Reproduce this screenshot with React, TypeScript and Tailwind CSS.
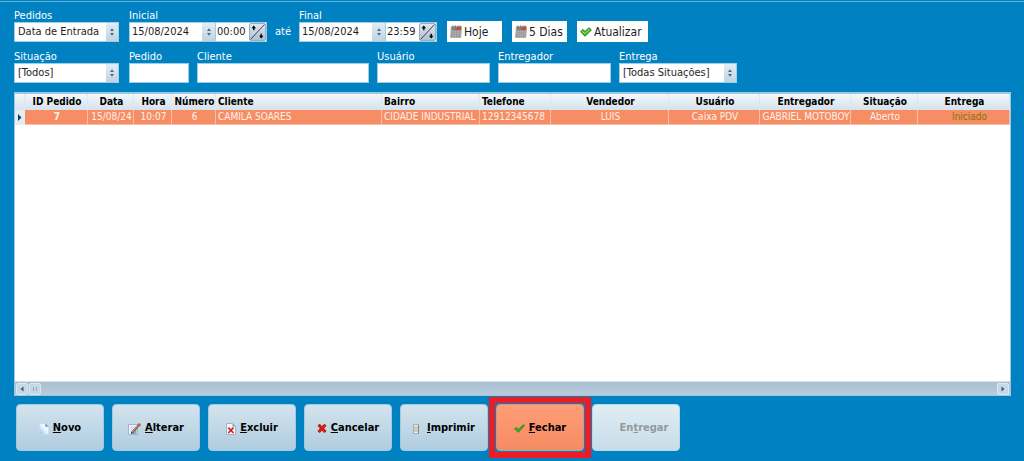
import type { ReactNode } from "react";

const inputBase =
  "block h-5 w-full border border-[#9fcfe4] bg-white px-[3px] text-[11px] leading-4 text-[#1e1e1e] outline-none";

function UpDown() {
  return (
    <svg viewBox="0 0 6 8" className="h-2 w-1.5" aria-hidden="true">
      <path d="M3 0.3 5 3H1Z M3 7.7 5 5H1Z" fill="#3d6c98" />
    </svg>
  );
}

function Field({ id, label, className, children }: { id: string; label: string; className: string; children: ReactNode }) {
  return (
    <div className={`flex flex-col ${className}`}>
      <label htmlFor={id} className="h-[13px] text-[11px] leading-[13px] whitespace-nowrap text-white">
        {label}
      </label>
      {children}
    </div>
  );
}

function SelectField({ id, label, className, options }: { id: string; label: string; className: string; options: string[] }) {
  return (
    <Field id={id} label={label} className={className}>
      <div className="relative">
        <select id={id} className={`${inputBase} appearance-none`}>
          {options.map((option) => (
            <option key={option}>{option}</option>
          ))}
        </select>
        <span className="pointer-events-none absolute inset-y-px right-px flex w-3 items-center justify-center bg-linear-to-b from-[#e3eef5] to-[#bfd3e1]">
          <UpDown />
        </span>
      </div>
    </Field>
  );
}

function TextField({ id, label, className }: { id: string; label: string; className: string }) {
  return (
    <Field id={id} label={label} className={className}>
      <input id={id} type="text" className={inputBase} />
    </Field>
  );
}

function DateTimeField({ id, label, date, time }: { id: string; label: string; date: string; time: string }) {
  return (
    <Field id={id} label={label} className="w-[138px]">
      <div className="flex h-5 border border-[#9fcfe4] bg-white text-[11px] text-[#1e1e1e]">
        <input id={id} type="text" defaultValue={date} className="w-[72px] px-0.5 outline-none" />
        <button type="button" aria-label={`${label}: alterar data`} className="flex w-3.5 items-center justify-center border-r border-[#9fcfe4] bg-linear-to-b from-[#e3eef5] to-[#bfd3e1]">
          <UpDown />
        </button>
        <input type="text" aria-label={`${label}: hora`} defaultValue={time} className="w-[33px] pl-px outline-none" />
        <button type="button" aria-label={`${label}: alterar hora`} className="flex-1 rounded-xs border border-[#8fb0c8] bg-linear-to-b from-[#dbe8f1] to-[#a9c3d6]">
          <svg viewBox="0 0 15 16" className="h-full w-full" aria-hidden="true">
            <path d="M0.5 15.5 14.5 0.5" stroke="#7a2a38" strokeWidth="1" />
            <path d="M1.5 4.2 3.8 1.5 6 4.2H4.5V6.2H3.1V4.2Z M9 11.8 11.2 14.5 13.5 11.8H11.9V9.8H10.5V11.8Z" fill="#000" />
          </svg>
        </button>
      </div>
    </Field>
  );
}

function CalendarIcon() {
  return (
    <svg viewBox="0 0 12 13" className="h-[13px] w-3 shrink-0" aria-hidden="true">
      <path d="M1.5 1.5H11.5L10.8 12.5H0.5Z" fill="#9a9695" stroke="#b5b1af" />
      <path d="M1.5 2.2H11L10.9 4.8H1.4Z" fill="#857e7c" />
      <rect x="6.5" y="2" width="4.6" height="3" fill="#d04a38" />
      <path d="M3 0.5V2.5M5.5 0.5V2.5M8 0.5V2.5M10 0.5V2.5" stroke="#777271" />
      <path d="M2.5 6.8H10M2.5 8.8H10M2.5 10.8H9" stroke="#c3bfbd" strokeDasharray="1.4 0.8" />
    </svg>
  );
}

function HeartCheckIcon() {
  return (
    <svg viewBox="0 0 12 10" className="h-2.5 w-3 shrink-0" aria-hidden="true">
      <path d="M0.7 4.6 2.8 2.5 5 4.4 9 0.7 11.4 2.9 5 9.3Z" fill="#46b82c" stroke="#24801a" strokeLinejoin="round" />
      <path d="M2 4.4 5 6.6 9.5 2" fill="none" stroke="#9be37d" />
    </svg>
  );
}

function QuickButton({ icon, className, children }: { icon: ReactNode; className: string; children: ReactNode }) {
  return (
    <button type="button" className={`flex h-[21px] items-center gap-0.5 bg-white px-[3px] text-[12px] leading-5 whitespace-nowrap text-[#1e1e1e] ${className}`}>
      {icon}
      <span>{children}</span>
    </button>
  );
}

const columns = [
  { title: "ID Pedido", value: "7", width: "w-[63px]", align: "text-center", cell: "font-bold" },
  { title: "Data", value: "15/08/24", width: "w-[46px]", align: "text-center", cell: "" },
  { title: "Hora", value: "10:07", width: "w-[38px]", align: "text-center", cell: "" },
  { title: "Número", value: "6", width: "w-[44px]", align: "text-center", cell: "" },
  { title: "Cliente", value: "CAMILA SOARES", width: "w-[166px]", align: "text-left", cell: "" },
  { title: "Bairro", value: "CIDADE INDUSTRIAL", width: "w-[98px]", align: "text-left", cell: "" },
  { title: "Telefone", value: "12912345678", width: "w-[71px]", align: "text-left", cell: "" },
  { title: "Vendedor", value: "LUIS", width: "w-[118px]", align: "text-center", cell: "" },
  { title: "Usuário", value: "Caixa PDV", width: "w-[91px]", align: "text-center", cell: "" },
  { title: "Entregador", value: "GABRIEL MOTOBOY", width: "w-[91px]", align: "text-center", cell: "" },
  { title: "Situação", value: "Aberto", width: "w-[67px]", align: "text-center", cell: "" },
  { title: "Entrega", value: "Iniciado", width: "w-[92px]", align: "text-center", cell: "pl-3 text-[#7f7405]" },
];

function OrdersTable() {
  return (
    <table className="w-full table-fixed border-separate border-spacing-0 text-[10px] whitespace-nowrap">
      <colgroup>
        <col className="w-2.5" />
        {columns.map((column) => (
          <col key={column.title} className={column.width} />
        ))}
      </colgroup>
      <thead>
        <tr className="h-4 bg-linear-to-b from-[#f3f8fb] to-[#d5e2ec] text-black">
          <th className="border-r border-[#dce8ef] p-0" />
          {columns.map((column) => (
            <th key={column.title} className={`border-r border-[#dce8ef] p-0 pl-0.5 leading-4 font-bold ${column.align}`}>
              {column.title}
            </th>
          ))}
        </tr>
      </thead>
      <tbody>
        <tr className="h-[15px] bg-[#f78d64] text-[#fff0e9]">
          <td className="bg-[#e2edf4] p-0">
            <svg viewBox="0 0 9 9" className="h-[9px] w-[9px]" aria-hidden="true">
              <path d="M3 1 6.5 4.5 3 8Z" fill="#123a6b" />
            </svg>
          </td>
          {columns.map((column) => (
            <td key={column.title} className={`border-r border-b border-[#f5c0a8] p-0 pl-0.5 leading-[14px] ${column.align} ${column.cell}`}>
              {column.value}
            </td>
          ))}
        </tr>
      </tbody>
    </table>
  );
}

function ScrollBar() {
  const button = "flex h-3 w-3 items-center justify-center rounded-xs border border-[#dbe8f0] bg-[#c7d8e5]";
  return (
    <div className="flex h-3.5 items-center gap-px border-t border-[#d5e1ea] bg-linear-to-b from-[#a9bfd3] to-[#b9ccdc] px-px">
      <button type="button" aria-label="Rolar para a esquerda" className={button}>
        <svg viewBox="0 0 6 6" className="size-1.5" aria-hidden="true">
          <path d="M4.5 0.5V5.5L1.5 3Z" fill="#245f91" />
        </svg>
      </button>
      <div className={button}>
        <svg viewBox="0 0 6 6" className="size-1.5" aria-hidden="true">
          <path d="M1.5 1V5M4.5 1V5" stroke="#8eabc2" />
        </svg>
      </div>
      <button type="button" aria-label="Rolar para a direita" className={`${button} ml-auto`}>
        <svg viewBox="0 0 6 6" className="size-1.5" aria-hidden="true">
          <path d="M1.5 0.5V5.5L4.5 3Z" fill="#245f91" />
        </svg>
      </button>
    </div>
  );
}

function NewIcon() {
  return (
    <svg viewBox="0 0 10 12" className="h-3 w-2.5" aria-hidden="true">
      <defs>
        <linearGradient id="sheet" x1="1" y1="0" x2="0" y2="1">
          <stop offset="0" stopColor="#fff" />
          <stop offset="0.5" stopColor="#e6f1fd" />
          <stop offset="1" stopColor="#8fbcf0" />
        </linearGradient>
      </defs>
      <path d="M0.5 0.5H6.5L9.5 3.5V11.5H0.5Z" fill="url(#sheet)" stroke="#c3dbf5" strokeWidth="0.7" />
      <path d="M6.3 0.3V3.7H9.7Z" fill="#5f9be0" />
    </svg>
  );
}

function EditIcon() {
  return (
    <svg viewBox="0 0 13 12" className="h-3 w-[13px]" aria-hidden="true">
      <rect x="0.5" y="1.5" width="9" height="10" fill="#eef4fd" stroke="#9fb3e3" />
      <path d="M2 4H7M2 6H5" stroke="#c3d2ee" />
      <path d="M8.5 5.5V11H4.5Z" fill="#8fa3dc" />
      <path d="M4 9.6 10.2 2.8" stroke="#6e6045" strokeWidth="2.4" />
      <path d="M4.2 9 9.8 2.8" stroke="#d4b877" strokeWidth="1" />
      <path d="M3 11 3.2 8.8 5 10.3Z" fill="#2c2c38" />
      <circle cx="11.2" cy="1.8" r="1.6" fill="#e3502a" />
    </svg>
  );
}

function DeleteIcon() {
  return (
    <svg viewBox="0 0 10 12" className="h-3 w-2.5" aria-hidden="true">
      <path d="M0.5 0.5H6.5L9.5 3.5V11.5H0.5Z" fill="#f6f6fb" stroke="#a9aec2" />
      <path d="M6.5 0.5V3.5H9.5Z" fill="#8a95b4" />
      <path d="M2.3 4.7 7.5 10M7.5 4.7 2.3 10" stroke="#cc2323" strokeWidth="1.7" />
    </svg>
  );
}

function CancelIcon() {
  return (
    <svg viewBox="0 0 10 11" className="h-[11px] w-2.5" aria-hidden="true">
      <path d="M1.6 1.8 8.4 9M8.4 1.8 1.6 9" stroke="#a50f08" strokeWidth="3" />
      <path d="M1.8 2 8.2 8.8M8.2 2 1.8 8.8" stroke="#df1f10" strokeWidth="1.9" />
    </svg>
  );
}

function PrintIcon() {
  return (
    <svg viewBox="0 0 6 10" className="mr-1 h-2.5 w-1.5" aria-hidden="true">
      <rect x="0.5" y="0.5" width="5" height="9" fill="#d3cdb0" stroke="#9fb1bc" />
      <path d="M1 1.5H5M1 8.5H5" stroke="#eef1ee" />
      <path d="M5.5 1V9.5" stroke="#7d8a92" />
    </svg>
  );
}

function CheckIcon() {
  return (
    <svg viewBox="0 0 11 9" className="h-[9px] w-[11px]" aria-hidden="true">
      <path d="M0.6 4.8 2.2 3.6 4.2 5.5 9.7 0.7 10.5 1.6 4.3 8.3Z" fill="#35b41f" stroke="#218016" strokeWidth="0.8" strokeLinejoin="round" />
    </svg>
  );
}

const normalLook = "border-[#a3cbe0] from-[#d3e3ed] to-[#b0cddf] text-black";

const actions = [
  { before: "", mark: "N", after: "ovo", icon: <NewIcon />, look: normalLook, frame: "", disabled: false },
  { before: "", mark: "A", after: "lterar", icon: <EditIcon />, look: normalLook, frame: "", disabled: false },
  { before: "", mark: "E", after: "xcluir", icon: <DeleteIcon />, look: normalLook, frame: "", disabled: false },
  { before: "", mark: "C", after: "ancelar", icon: <CancelIcon />, look: normalLook, frame: "", disabled: false },
  { before: "", mark: "I", after: "mprimir", icon: <PrintIcon />, look: normalLook, frame: "", disabled: false },
  { before: "", mark: "F", after: "echar", icon: <CheckIcon />, look: "border-[#b9a08f] from-[#ff9d76] to-[#f68b62] text-black", frame: "outline-6 outline-offset-1 outline-[#ed1c24]", disabled: false },
  { before: "En", mark: "t", after: "regar", icon: <span className="w-3" />, look: "border-[#b5d9e8] from-[#dfedf3] to-[#c9dde9] text-[#949a9c]", frame: "", disabled: true },
];

export default function App() {
  return (
    <div className="flex min-h-screen flex-col bg-[#0081c2] font-['DejaVu_Sans_Condensed','DejaVu_Sans',sans-serif]">
      <div className="mt-px h-px bg-[#63b4d9]" />
      <main className="flex flex-1 flex-col pt-[7px] pr-[13px] pb-2.5 pl-3.5">
        <form className="flex flex-col gap-2">
          <div className="flex items-end">
            <SelectField id="pedidos" label="Pedidos" className="w-[105px]" options={["Data de Entrada"]} />
            <div className="ml-2.5 flex items-end">
              <DateTimeField id="inicial" label="Inicial" date="15/08/2024" time="00:00" />
              <span className="w-8 text-center text-[11px] leading-5 text-white">até</span>
              <DateTimeField id="final" label="Final" date="15/08/2024" time="23:59" />
            </div>
            <div className="ml-2.5 flex items-end gap-2.5">
              <QuickButton icon={<CalendarIcon />} className="w-[55px]">Hoje</QuickButton>
              <QuickButton icon={<CalendarIcon />} className="w-[55px]">5 Dias</QuickButton>
              <QuickButton icon={<HeartCheckIcon />} className="w-[71px]">Atualizar</QuickButton>
            </div>
          </div>
          <div className="flex items-end gap-2">
            <SelectField id="situacao" label="Situação" className="mr-0.5 w-[105px]" options={["[Todos]"]} />
            <TextField id="pedido" label="Pedido" className="w-[60px]" />
            <TextField id="cliente" label="Cliente" className="w-[172px]" />
            <TextField id="usuario" label="Usuário" className="w-[113px]" />
            <TextField id="entregador" label="Entregador" className="w-[113px]" />
            <SelectField id="entrega" label="Entrega" className="w-[118px]" options={["[Todas Situações]"]} />
          </div>
        </form>
        <section className="mt-[9px] flex flex-1 flex-col border border-t-2 border-[#9cc8de] bg-white">
          <OrdersTable />
          <div className="mt-auto">
            <ScrollBar />
          </div>
        </section>
        <div className="mt-2 ml-0.5 flex gap-2">
          {actions.map((action) => (
            <div key={action.after} className={action.frame}>
              <button
                type="button"
                disabled={action.disabled}
                className={`flex h-[47px] w-[88px] items-center justify-center gap-1 rounded-sm border bg-linear-to-b pt-0.5 text-[11px] font-bold ${action.look}`}
              >
                {action.icon}
                <span>
                  {action.before}
                  <span className="underline">{action.mark}</span>
                  {action.after}
                </span>
              </button>
            </div>
          ))}
        </div>
      </main>
    </div>
  );
}
